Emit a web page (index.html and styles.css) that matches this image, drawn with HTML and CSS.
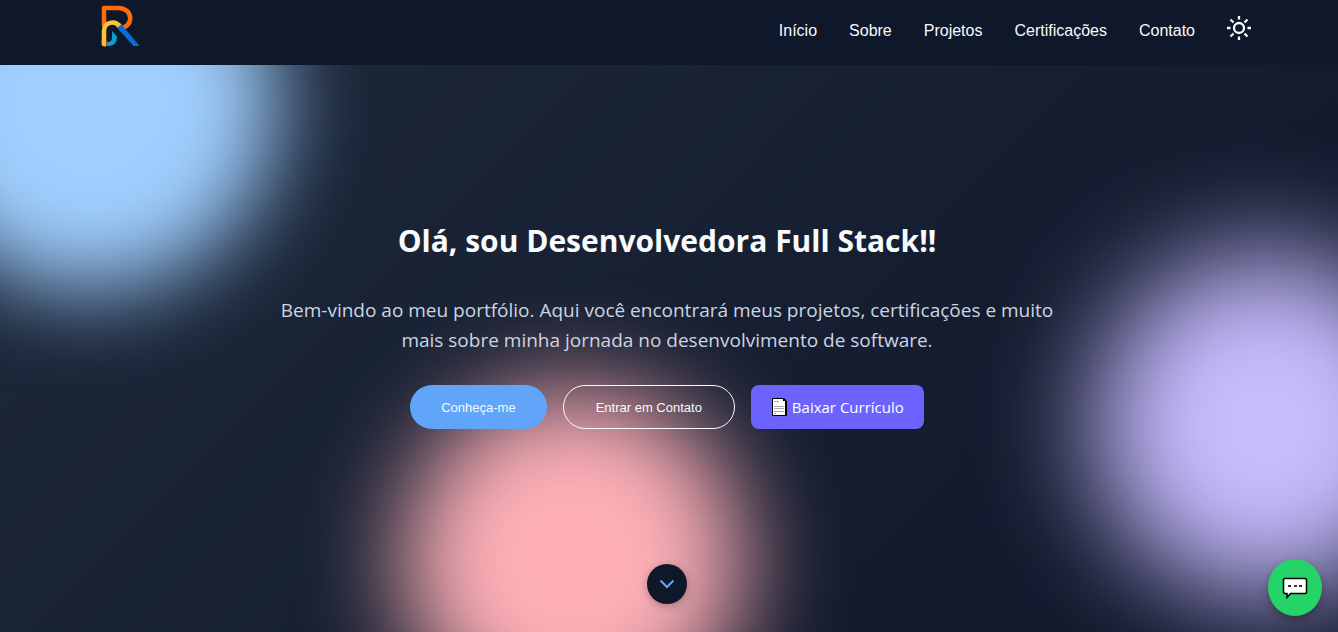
FILE: index.html
```
<!DOCTYPE html>
<html lang="pt-BR">
<head>
<meta charset="utf-8">
<meta name="viewport" content="width=device-width, initial-scale=1">
<title>Portfólio</title>
<link rel="stylesheet" href="styles.css">
</head>
<body>
<header class="header">
  <nav class="nav">
    <a class="logo" href="#inicio" aria-label="Página inicial">
      <svg width="42" height="44" viewBox="0 0 42 44" fill="none" stroke-width="4.500">
        <path d="M5 22V4H19.500C35 4 35 24.500 20 24" stroke="#ff6a0a" stroke-linejoin="round"/>
        <path d="M15 19H21.500L40.500 42H34.500L17 22.500Z" fill="#0b6bd8"/>
        <path d="M13 27L18 32.500Q18.500 42 8 42.300V38Q13.500 38 13 33Z" fill="#109bd5"/>
        <path d="M5 41V27C5 17.500 16 16.500 20.500 22" stroke="#fdc431"/>
        <path d="M2.750 36H7.250V42.500H5.500Q2.750 42.500 2.750 40Z" fill="#fdb931"/>
      </svg>
    </a>
    <div class="menu">
      <a href="#inicio">Início</a>
      <a href="#sobre">Sobre</a>
      <a href="#projetos">Projetos</a>
      <a href="#certificacoes">Certificações</a>
      <a href="#contato">Contato</a>
      <button class="theme" type="button" aria-label="Alternar tema">
        <svg width="24" height="24" viewBox="0 0 24 24" fill="none" stroke="#f8fafc" stroke-width="2.300">
          <circle cx="12" cy="12" r="5"/>
          <path d="M12 0v3.500M12 20.500v3.500M0 12h3.500M20.500 12h3.500M3.500 3.500l3 3M17.500 17.500l3 3M3.500 20.500l3-3M17.500 6.500l3-3"/>
        </svg>
      </button>
    </div>
  </nav>
</header>
<main class="hero" id="inicio">
  <div class="blob blob-blue"></div>
  <div class="blob blob-purple"></div>
  <div class="blob blob-pink"></div>
  <section class="content">
    <h1>Olá, sou Desenvolvedora Full Stack!!</h1>
    <p>Bem-vindo ao meu portfólio. Aqui você encontrará meus projetos, certificações e muito mais sobre minha jornada no desenvolvimento de software.</p>
    <div class="actions">
      <button class="btn btn-primary" type="button">Conheça-me</button>
      <button class="btn btn-outline" type="button">Entrar em Contato</button>
      <a class="download" href="#curriculo">
        <svg width="16" height="18" viewBox="0 0 16 18" aria-hidden="true">
          <path d="M1 0H13L16 3V18H1Z" fill="#000"/>
          <path d="M2 1H12V3H14V17H2Z" fill="#fff"/>
          <path d="M3 3.500h5M3 8.500h10M3 10.500h10M3 13.500h10M3 15.500h2" stroke="#aaa"/>
        </svg>
        Baixar Currículo</a>
    </div>
  </section>
  <a class="scroll" href="#sobre" aria-label="Rolar para baixo">
    <svg width="16" height="10" viewBox="0 0 16 10" fill="none" stroke="#60a5fa" stroke-width="2"><path d="M1.500 1.500L8 8L14.500 1.500"/></svg>
  </a>
</main>
<button class="chat" type="button" aria-label="Abrir conversa">
  <svg width="26" height="22" viewBox="0 0 26 22">
    <path d="M2.500 1.500H23.500L24.500 2.500V15.500L23.500 16.500H8.500L5 20.500V16.500H2.500L1.500 15.500V2.500Z" fill="#fff" stroke="#000" stroke-width="1.500"/>
    <path d="M6 8h3v2H6zM12 8h3v2h-3zM17 8h3v2h-3z" fill="#333"/>
  </svg>
</button>
</body>
</html>
```
FILE: styles.css
```
* { box-sizing: border-box; }
body {
  margin: 0;
  min-height: 100vh;
  display: flex;
  flex-direction: column;
  background: #0f172a;
  color: #f8fafc;
  font-family: "Open Sans", "Noto Sans", sans-serif;
}
.header { background: #0f172a; }
.nav {
  max-width: 1164px;
  height: 65px;
  margin: 0 auto;
  padding-left: 12px;
  display: flex;
  justify-content: space-between;
}
.logo { padding-top: 4px; }
.menu {
  display: flex;
  align-items: center;
  gap: 32px;
  padding-bottom: 4px;
  font: 16px/24px "Liberation Sans", Arial, sans-serif;
}
.menu a { color: #f8fafc; text-decoration: none; }
.theme {
  display: flex;
  padding: 0 0 5px;
  border: 0;
  background: none;
}
.hero {
  position: relative;
  flex: 1;
  overflow: hidden;
  display: flex;
  flex-direction: column;
  align-items: center;
  justify-content: space-between;
  padding: 151px 28px 28px 24px;
  background: linear-gradient(135deg, #1e293b, #0f172a);
}
.blob {
  position: absolute;
  border-radius: 50%;
}
.blob-blue { left: -98px; top: -150px; width: 376px; height: 376px; background: #a0cfff; filter: blur(45px); }
.blob-purple { right: -100px; top: 188px; width: 344px; height: 344px; background: #c8bcff; filter: blur(56px); }
.blob-pink { left: 30%; bottom: -100px; width: 344px; height: 344px; background: #ffb0b7; filter: blur(50px); }
.content {
  position: relative;
  max-width: 800px;
  text-align: center;
}
h1 {
  margin: 0 0 29px;
  font-size: 30px;
  line-height: 50px;
  font-weight: 700;
}
p {
  margin: 0 0 30px;
  color: #cbd5e1;
  font-size: 19px;
  line-height: 30px;
}
.actions {
  display: flex;
  justify-content: center;
  gap: 16px;
}
.btn {
  height: 44px;
  padding: 0 32px;
  border: 0;
  border-radius: 24px;
  color: #f8fafc;
  font: 13px "Liberation Sans", Arial, sans-serif;
}
.btn-primary { padding: 0 31px; background: #60a5fa; }
.btn-outline { background: none; border: 1px solid #f8fafc; }
.download {
  display: flex;
  align-items: center;
  gap: 5px;
  height: 44px;
  padding: 0 20px;
  border-radius: 8px;
  background: #6c63ff;
  color: #fff;
  font-size: 15px;
  text-decoration: none;
}
.scroll {
  position: relative;
  display: grid;
  place-items: center;
  width: 40px;
  height: 40px;
  border-radius: 50%;
  background: #0f172a;
  box-shadow: 0 2px 8px rgba(0, 0, 0, .25);
}
.chat {
  position: fixed;
  right: 16px;
  bottom: 16px;
  display: grid;
  place-items: center;
  width: 54px;
  height: 57px;
  padding: 0;
  border: 0;
  border-radius: 50%;
  background: #25d366;
  box-shadow: 0 4px 8px rgba(0, 0, 0, .3);
}
```
